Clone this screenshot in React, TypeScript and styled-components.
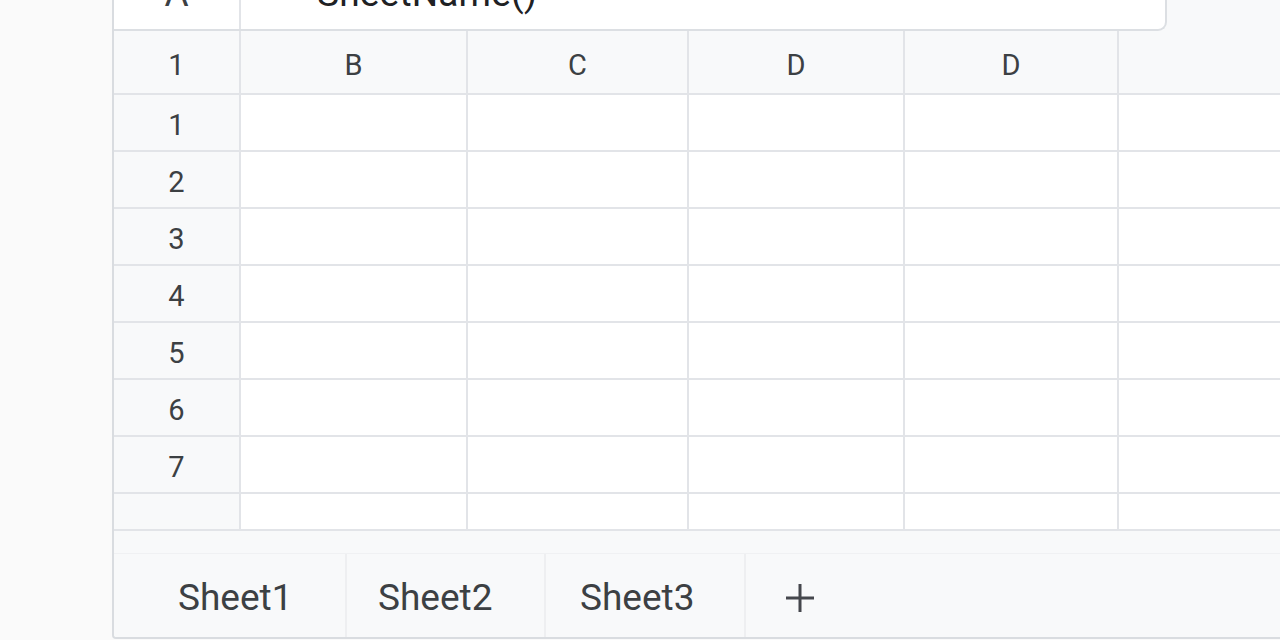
import React from "react";
import styled, { createGlobalStyle } from "styled-components";

const GlobalStyle = createGlobalStyle`
  html, body {
    margin: 0;
    padding: 0;
    background: #fafafa;
    overflow: hidden;
  }
  body {
    font-family: Roboto, "Liberation Sans", Arial, sans-serif;
    color: #3c4043;
  }
`;

const Page = styled.div`
  width: 1280px;
  height: 640px;
  overflow: hidden;
  padding-left: 112px;
  box-sizing: border-box;
  background: #fafafa;
`;

const Panel = styled.div`
  margin-top: -34px;
  width: 1300px;
  height: 673px;
  box-sizing: border-box;
  border-left: 2px solid #d9dce0;
  border-bottom: 2px solid #d9dce0;
  border-bottom-left-radius: 4px;
  background: #f8f9fa;
  display: flex;
  flex-direction: column;
  overflow: hidden;
`;

const FormulaBar = styled.div`
  width: 1053px;
  height: 65px;
  flex: none;
  box-sizing: border-box;
  background: #ffffff;
  border-right: 2px solid #dcdfe3;
  border-bottom: 2px solid #dcdfe3;
  border-bottom-right-radius: 9px;
  display: flex;
  align-items: stretch;
`;

const NameBox = styled.div`
  width: 127px;
  box-sizing: border-box;
  border-right: 2px solid #e2e4e8;
  display: flex;
  align-items: flex-end;
  justify-content: center;
  padding-bottom: 17px;
  font-size: 37px;
  line-height: 37px;
  color: #3c4043;
`;

const FormulaText = styled.div`
  display: flex;
  align-items: flex-end;
  padding-left: 76px;
  padding-bottom: 17px;
  font-size: 37px;
  line-height: 37px;
  letter-spacing: 0.2px;
  color: #202124;
`;

const Grid = styled.div`
  display: flex;
  flex-direction: column;
  flex: none;
`;

const Row = styled.div<{ $h: number }>`
  display: flex;
  height: ${(p) => p.$h}px;
  flex: none;
`;

const Cell = styled.div<{ $w?: number; $head?: boolean; $last?: boolean }>`
  box-sizing: border-box;
  ${(p) => (p.$w ? `width: ${p.$w}px; flex: none;` : "flex: 1;")}
  background: ${(p) => (p.$head ? "#f8f9fa" : "#ffffff")};
  border-bottom: 2px solid #e2e4e8;
  border-right: ${(p) => (p.$last ? "none" : "2px solid #e2e4e8")};
  display: flex;
  align-items: center;
  justify-content: center;
  font-size: 29px;
  color: #3c4043;
  padding-top: 5px;
`;

const TabBar = styled.div`
  flex: 1;
  display: flex;
  flex-direction: column;
  background: #f8f9fa;
`;

const TopBand = styled.div`
  height: 22px;
  flex: none;
  border-bottom: 1px solid #f0f1f3;
  background: #f8f9fa;
`;

const Tabs = styled.div`
  flex: 1;
  display: flex;
  align-items: stretch;
`;

const Tab = styled.div<{ $w: number; $pl: number }>`
  width: ${(p) => p.$w}px;
  box-sizing: border-box;
  padding-left: ${(p) => p.$pl}px;
  padding-top: 4px;
  border-right: 2px solid #eeeff1;
  display: flex;
  align-items: center;
  font-size: 37px;
  color: #3c4043;
`;

const AddTab = styled.div`
  width: 108px;
  display: flex;
  align-items: center;
  justify-content: center;
  padding-top: 4px;
`;

const cols = [
  { w: 227, label: "B" },
  { w: 221, label: "C" },
  { w: 216, label: "D" },
  { w: 214, label: "D" },
];

const rows: { label: string; h: number }[] = [
  { label: "1", h: 57 },
  { label: "2", h: 57 },
  { label: "3", h: 57 },
  { label: "4", h: 57 },
  { label: "5", h: 57 },
  { label: "6", h: 57 },
  { label: "7", h: 57 },
  { label: "", h: 37 },
];

export default function App() {
  return (
    <>
      <GlobalStyle />
      <Page>
        <Panel>
          <FormulaBar>
            <NameBox>A</NameBox>
            <FormulaText>SheetName()</FormulaText>
          </FormulaBar>
          <Grid>
            <Row $h={64}>
              <Cell $w={127} $head>
                1
              </Cell>
              {cols.map((c, i) => (
                <Cell key={i} $w={c.w} $head>
                  {c.label}
                </Cell>
              ))}
              <Cell $head $last />
            </Row>
            {rows.map((r, ri) => (
              <Row key={ri} $h={r.h}>
                <Cell $w={127} $head>
                  {r.label}
                </Cell>
                {cols.map((c, i) => (
                  <Cell key={i} $w={c.w} />
                ))}
                <Cell $last />
              </Row>
            ))}
          </Grid>
          <TabBar>
            <TopBand />
            <Tabs>
              <Tab $w={233} $pl={64}>Sheet1</Tab>
              <Tab $w={199} $pl={31}>Sheet2</Tab>
              <Tab $w={200} $pl={34}>Sheet3</Tab>
              <AddTab>
                <svg width="32" height="32" viewBox="0 0 32 32">
                  <path
                    d="M16 2v28M2 16h28"
                    stroke="#45474c"
                    strokeWidth="3"
                    fill="none"
                  />
                </svg>
              </AddTab>
            </Tabs>
          </TabBar>
        </Panel>
      </Page>
    </>
  );
}
